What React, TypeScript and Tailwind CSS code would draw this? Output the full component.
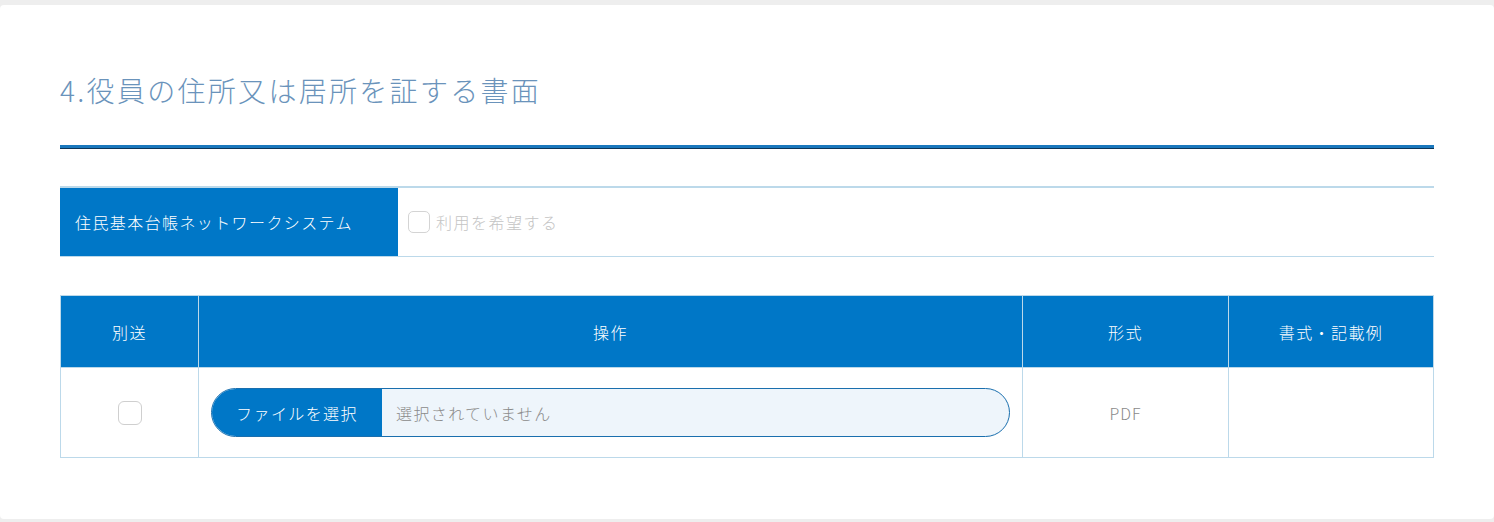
import React from "react";

const font = { fontFamily: '"Noto Sans CJK JP Light", "Noto Sans CJK JP", "Noto Sans", sans-serif' };

export default function App() {
  return (
    <div className="w-[1494px] h-[522px] bg-[#eeeeee] pt-[5px] pb-[3px] overflow-hidden" style={font}>
      <div className="h-full bg-white rounded-[4px] px-[60px] pt-[65px]">
        <h2 className="text-[28px] leading-[40px] font-light text-[#6a93bb] tracking-[2.3px]">
          4.役員の住所又は居所を証する書面
        </h2>
        <div className="mt-[35px] h-[3px] bg-[#1a78bd]" />
        <div className="h-px bg-[#0c3558]" />

        <div className="mt-[37px] flex border-t-2 border-b border-[#bcd9ea] h-[71px]">
          <div className="w-[338px] bg-[#0077c7] flex items-center pl-[15px] text-white text-[16px] tracking-[1.4px] font-light">
            住民基本台帳ネットワークシステム
          </div>
          <div className="flex items-center pl-[10px] gap-[6px]">
            <span className="w-[22px] h-[22px] rounded-[5px] border border-[#d4d4d4] bg-white" />
            <span className="text-[16px] tracking-[1.5px] font-light text-[#c4c4c4]">利用を希望する</span>
          </div>
        </div>

        <table className="mt-[38px] w-full border-collapse">
          <thead>
            <tr className="h-[72px] bg-[#0077c7] text-white text-[16px] tracking-[1.4px] font-light">
              <th className="w-[138px] border border-[#bcd9ea] font-light">別送</th>
              <th className="w-[824px] border border-[#bcd9ea] font-light">操作</th>
              <th className="w-[206px] border border-[#bcd9ea] font-light">形式</th>
              <th className="border border-[#bcd9ea] font-light">書式・記載例</th>
            </tr>
          </thead>
          <tbody>
            <tr className="h-[90px]">
              <td className="border border-[#bcd9ea]">
                <div className="flex justify-center">
                  <span className="w-[24px] h-[24px] rounded-[6px] border border-[#cfcfcf] bg-white" />
                </div>
              </td>
              <td className="border border-[#bcd9ea] px-[12px]">
                <div className="flex h-[49px] rounded-full border border-[#1a6fae] bg-[#eef5fb] overflow-hidden">
                  <div className="w-[170px] bg-[#0077c7] text-white text-[16px] tracking-[1.4px] font-light flex items-center justify-center">
                    ファイルを選択
                  </div>
                  <div className="flex items-center pl-[14px] text-[16px] tracking-[1.4px] font-light text-[#8a8a8a]">
                    選択されていません
                  </div>
                </div>
              </td>
              <td className="border border-[#bcd9ea] text-center text-[16px] tracking-[1px] font-light text-[#8a8a8a]">PDF</td>
              <td className="border border-[#bcd9ea]" />
            </tr>
          </tbody>
        </table>
      </div>
    </div>
  );
}
